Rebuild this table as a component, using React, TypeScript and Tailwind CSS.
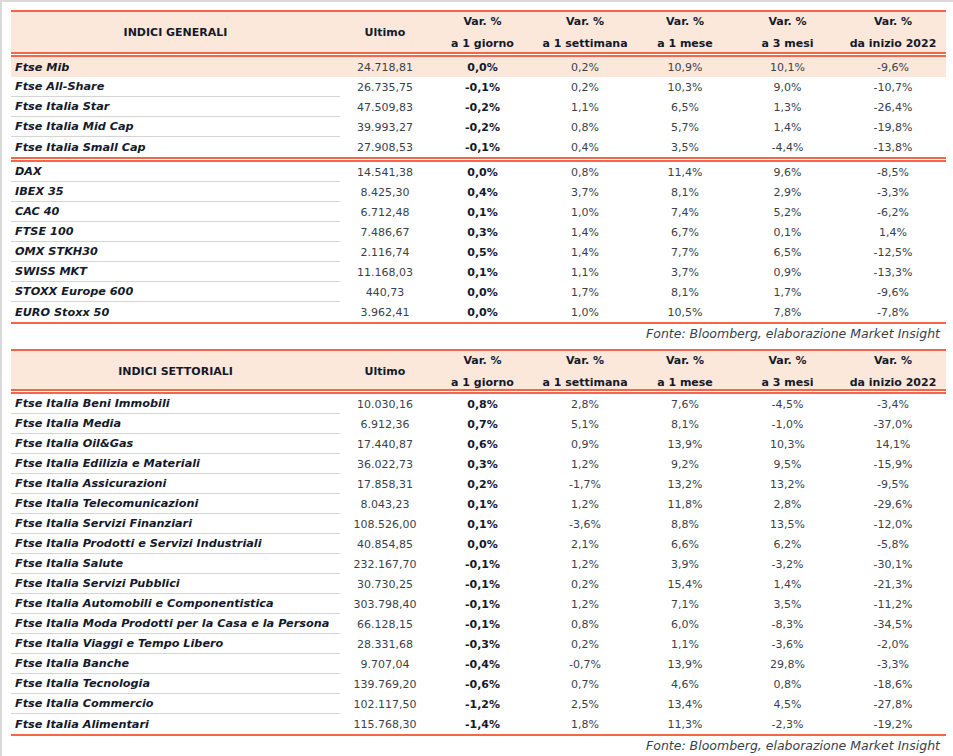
type Row = [string, string, string, string, string, string, string];

const generali: Row[] = [
  ["Ftse Mib", "24.718,81", "0,0%", "0,2%", "10,9%", "10,1%", "-9,6%"],
  ["Ftse All-Share", "26.735,75", "-0,1%", "0,2%", "10,3%", "9,0%", "-10,7%"],
  ["Ftse Italia Star", "47.509,83", "-0,2%", "1,1%", "6,5%", "1,3%", "-26,4%"],
  ["Ftse Italia Mid Cap", "39.993,27", "-0,2%", "0,8%", "5,7%", "1,4%", "-19,8%"],
  ["Ftse Italia Small Cap", "27.908,53", "-0,1%", "0,4%", "3,5%", "-4,4%", "-13,8%"],
];

const esteri: Row[] = [
  ["DAX", "14.541,38", "0,0%", "0,8%", "11,4%", "9,6%", "-8,5%"],
  ["IBEX 35", "8.425,30", "0,4%", "3,7%", "8,1%", "2,9%", "-3,3%"],
  ["CAC 40", "6.712,48", "0,1%", "1,0%", "7,4%", "5,2%", "-6,2%"],
  ["FTSE 100", "7.486,67", "0,3%", "1,4%", "6,7%", "0,1%", "1,4%"],
  ["OMX STKH30", "2.116,74", "0,5%", "1,4%", "7,7%", "6,5%", "-12,5%"],
  ["SWISS MKT", "11.168,03", "0,1%", "1,1%", "3,7%", "0,9%", "-13,3%"],
  ["STOXX Europe 600", "440,73", "0,0%", "1,7%", "8,1%", "1,7%", "-9,6%"],
  ["EURO Stoxx 50", "3.962,41", "0,0%", "1,0%", "10,5%", "7,8%", "-7,8%"],
];

const settoriali: Row[] = [
  ["Ftse Italia Beni Immobili", "10.030,16", "0,8%", "2,8%", "7,6%", "-4,5%", "-3,4%"],
  ["Ftse Italia Media", "6.912,36", "0,7%", "5,1%", "8,1%", "-1,0%", "-37,0%"],
  ["Ftse Italia Oil&Gas", "17.440,87", "0,6%", "0,9%", "13,9%", "10,3%", "14,1%"],
  ["Ftse Italia Edilizia e Materiali", "36.022,73", "0,3%", "1,2%", "9,2%", "9,5%", "-15,9%"],
  ["Ftse Italia Assicurazioni", "17.858,31", "0,2%", "-1,7%", "13,2%", "13,2%", "-9,5%"],
  ["Ftse Italia Telecomunicazioni", "8.043,23", "0,1%", "1,2%", "11,8%", "2,8%", "-29,6%"],
  ["Ftse Italia Servizi Finanziari", "108.526,00", "0,1%", "-3,6%", "8,8%", "13,5%", "-12,0%"],
  ["Ftse Italia Prodotti e Servizi Industriali", "40.854,85", "0,0%", "2,1%", "6,6%", "6,2%", "-5,8%"],
  ["Ftse Italia Salute", "232.167,70", "-0,1%", "1,2%", "3,9%", "-3,2%", "-30,1%"],
  ["Ftse Italia Servizi Pubblici", "30.730,25", "-0,1%", "0,2%", "15,4%", "1,4%", "-21,3%"],
  ["Ftse Italia Automobili e Componentistica", "303.798,40", "-0,1%", "1,2%", "7,1%", "3,5%", "-11,2%"],
  ["Ftse Italia Moda Prodotti per la Casa e la Persona", "66.128,15", "-0,1%", "0,8%", "6,0%", "-8,3%", "-34,5%"],
  ["Ftse Italia Viaggi e Tempo Libero", "28.331,68", "-0,3%", "0,2%", "1,1%", "-3,6%", "-2,0%"],
  ["Ftse Italia Banche", "9.707,04", "-0,4%", "-0,7%", "13,9%", "29,8%", "-3,3%"],
  ["Ftse Italia Tecnologia", "139.769,20", "-0,6%", "0,7%", "4,6%", "0,8%", "-18,6%"],
  ["Ftse Italia Commercio", "102.117,50", "-1,2%", "2,5%", "13,4%", "4,5%", "-27,8%"],
  ["Ftse Italia Alimentari", "115.768,30", "-1,4%", "1,8%", "11,3%", "-2,3%", "-19,2%"],
];

const cols = "grid grid-cols-[329px_90px_105px_100px_100px_105px_106px]";

function DoubleRule() {
  return (
    <div className="flex flex-col">
      <div className="h-[2px] bg-[#f2664c]" />
      <div className="h-[1px] bg-white" />
      <div className="h-[2px] bg-[#f2664c]" />
    </div>
  );
}

function Header({ title, h }: { title: string; h: string }) {
  const heads: [string, string][] = [
    ["Var. %", "a 1 giorno"],
    ["Var. %", "a 1 settimana"],
    ["Var. %", "a 1 mese"],
    ["Var. %", "a 3 mesi"],
    ["Var. %", "da inizio 2022"],
  ];
  return (
    <div className={`${cols} ${h} pt-[2px] bg-[#fce8da] text-[11px] font-bold text-[#14192b]`}>
      <div className="flex items-center justify-center">{title}</div>
      <div className="flex items-center justify-center">Ultimo</div>
      {heads.map(([a, b], i) => (
        <div key={i} className="flex flex-col items-center justify-center gap-[6px] leading-[16px]">
          <span>{a}</span>
          <span>{b}</span>
        </div>
      ))}
    </div>
  );
}

function Rows({ rows, highlightFirst }: { rows: Row[]; highlightFirst?: boolean }) {
  return (
    <div>
      {rows.map((r, i) => {
        const last = i === rows.length - 1;
        const hl = highlightFirst && i === 0;
        return (
          <div key={r[0]} className={`${cols} h-[20px] text-[11px] ${hl ? "bg-[#fce8da]" : ""}`}>
            <div
              className={`flex items-center pl-[4px] pt-[2px] font-bold italic text-[11.25px] text-[#14192b] ${
                !last && !hl ? "border-b border-[#d4d4d4]" : ""
              }`}
            >
              {r[0]}
            </div>
            <div className="flex items-center justify-center pt-[2px] text-[#3a3f4a]">{r[1]}</div>
            <div className="flex items-center justify-center pt-[2px] font-bold text-[#14192b]">{r[2]}</div>
            {r.slice(3).map((v, j) => (
              <div key={j} className="flex items-center justify-center pt-[2px] text-[#3a3f4a]">
                {v}
              </div>
            ))}
          </div>
        );
      })}
    </div>
  );
}

function Fonte() {
  return (
    <div className="h-[18px] flex items-center justify-end pr-[6px] pt-[2px] text-[12.5px] italic text-[#3a3f4a]">
      Fonte: Bloomberg, elaborazione Market Insight
    </div>
  );
}

export default function App() {
  return (
    <div
      className="w-[953px] h-[756px] bg-white border-t-2 border-l-2 border-[#dadada] pl-[9px] pt-[8px] overflow-hidden"
      style={{ fontFamily: "'DejaVu Sans', Lato, sans-serif" }}
    >
      <div className="w-[935px]">
        <div className="h-[2px] bg-[#f2664c]" />
        <Header title="INDICI GENERALI" h="h-[40px]" />
        <DoubleRule />
        <Rows rows={generali} highlightFirst />
        <DoubleRule />
        <Rows rows={esteri} />
        <div className="h-[2px] bg-[#f2664c]" />
        <Fonte />

        <div className="h-[7px]" />
        <div className="h-[2px] bg-[#f2664c]" />
        <Header title="INDICI SETTORIALI" h="h-[38px]" />
        <DoubleRule />
        <Rows rows={settoriali} />
        <div className="h-[2px] bg-[#f2664c]" />
        <Fonte />
      </div>
    </div>
  );
}
